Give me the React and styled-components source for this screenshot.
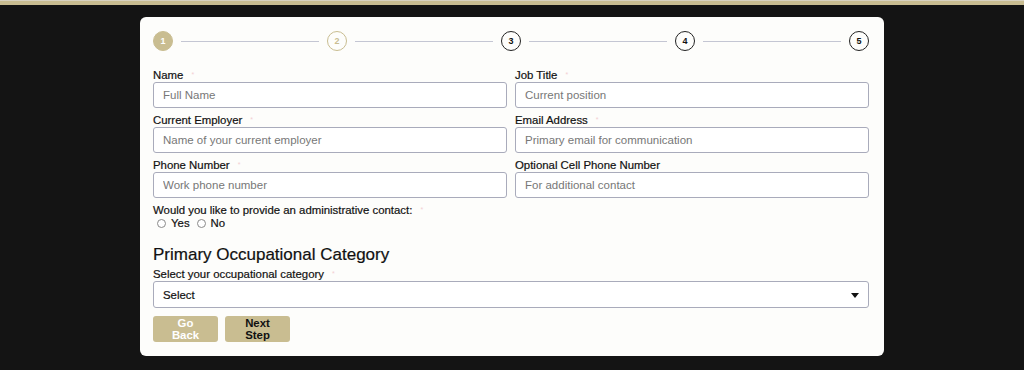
import React from 'react';
import styled, { createGlobalStyle } from 'styled-components';

const GlobalStyle = createGlobalStyle`
    html, body {
        margin: 0;
        padding: 0;
        background: #141414;
        font-family: "Liberation Sans", Arial, sans-serif;
    }
`;

const GOLD = '#c9bd91';

const TopBand = styled.div`
    height: 4px;
    border-top: 1px solid #d8d2c0;
    background: ${GOLD};
`;

const Page = styled.div`
    display: flex;
    justify-content: flex-start;
    padding: 12px 0 0 140px;
    height: 354px;
`;

const Card = styled.div`
    width: 744px;
    height: 339px;
    box-sizing: border-box;
    padding: 14px 15px 14px 13px;
    background: #fdfdfb;
    border-radius: 6px;
`;

const Stepper = styled.div`
    display: flex;
    align-items: center;
    height: 20px;
    margin-bottom: 17px;
`;

const StepCircle = styled.div`
    width: 20px;
    height: 20px;
    box-sizing: border-box;
    border-radius: 50%;
    display: flex;
    align-items: center;
    justify-content: center;
    font-size: 9px;
    font-weight: bold;
    border: 1px solid ${(p) => (p.state === 'todo' ? '#222' : GOLD)};
    background: ${(p) => (p.state === 'active' ? GOLD : 'transparent')};
    color: ${(p) => (p.state === 'active' ? '#fff' : p.state === 'next' ? GOLD : '#111')};
`;

const StepLine = styled.div`
    flex: 1;
    height: 1px;
    margin: 0 8px;
    background: #c4c6d3;
`;

const Grid = styled.div`
    display: grid;
    grid-template-columns: 1fr 1fr;
    column-gap: 8px;
    row-gap: 5px;
`;

const Field = styled.div`
    display: flex;
    flex-direction: column;
`;

const Label = styled.label`
    display: block;
    height: 14px;
    line-height: 14px;
    font-size: 11.4px;
    color: #111;
    -webkit-text-stroke: 0.2px #111;
`;

const Star = styled.span`
    color: #f3cfd2;
    font-size: 7px;
    margin-left: 8px;
    vertical-align: top;
    -webkit-text-stroke: 0;
`;

const Input = styled.input`
    height: 26px;
    box-sizing: border-box;
    border: 1px solid #a9abbb;
    border-radius: 3px;
    padding: 0 9px;
    font-family: inherit;
    font-size: 11.5px;
    background: #fff;
    &::placeholder {
        color: #777;
    }
`;

const Question = styled(Label)`
    margin-top: 5px;
`;

const RadioRow = styled.div`
    display: flex;
    align-items: center;
    height: 12px;
    padding-left: 4px;
    gap: 7px;
`;

const RadioOption = styled.span`
    display: flex;
    align-items: center;
    gap: 5px;
    font-size: 11.4px;
    color: #111;
    -webkit-text-stroke: 0.2px #111;
`;

const RadioDot = styled.span`
    width: 9px;
    height: 9px;
    box-sizing: border-box;
    border: 1px solid #8a8a8a;
    border-radius: 50%;
    background: #fff;
`;

const Heading = styled.h2`
    margin: 16px 0 2px;
    height: 20px;
    line-height: 20px;
    font-size: 17px;
    font-weight: normal;
    color: #111;
    -webkit-text-stroke: 0.2px #111;
`;

const SelectBox = styled.div`
    height: 27px;
    box-sizing: border-box;
    border: 1px solid #a9abbb;
    border-radius: 3px;
    padding: 0 9px 0 9px;
    display: flex;
    align-items: center;
    justify-content: space-between;
    background: #fff;
    font-size: 11.4px;
    color: #111;
    -webkit-text-stroke: 0.2px #111;
`;

const Caret = styled.span`
    width: 0;
    height: 0;
    border-left: 4px solid transparent;
    border-right: 4px solid transparent;
    border-top: 5px solid #111;
    margin-top: 2px;
`;

const Buttons = styled.div`
    display: flex;
    gap: 7px;
    margin-top: 8px;
`;

const Button = styled.button`
    width: 65px;
    height: 26px;
    border: none;
    border-radius: 3px;
    background: ${GOLD};
    color: ${(p) => (p.light ? '#fff' : '#111')};
    font-family: inherit;
    font-size: 11.4px;
    font-weight: bold;
    line-height: 12px;
    padding: 0 14px;
`;

const steps = [
    { n: 1, state: 'active' },
    { n: 2, state: 'next' },
    { n: 3, state: 'todo' },
    { n: 4, state: 'todo' },
    { n: 5, state: 'todo' },
];

const fields = [
    { label: 'Name', placeholder: 'Full Name', required: true },
    { label: 'Job Title', placeholder: 'Current position', required: true },
    { label: 'Current Employer', placeholder: 'Name of your current employer', required: true },
    { label: 'Email Address', placeholder: 'Primary email for communication', required: true },
    { label: 'Phone Number', placeholder: 'Work phone number', required: true },
    { label: 'Optional Cell Phone Number', placeholder: 'For additional contact', required: false },
];

export default function App() {
    return (
        <>
            <GlobalStyle />
            <TopBand />
            <Page>
                <Card>
                    <Stepper>
                        {steps.map((s, i) => (
                            <React.Fragment key={s.n}>
                                {i > 0 && <StepLine />}
                                <StepCircle state={s.state}>{s.n}</StepCircle>
                            </React.Fragment>
                        ))}
                    </Stepper>

                    <Grid>
                        {fields.map((f) => (
                            <Field key={f.label}>
                                <Label>
                                    {f.label}
                                    {f.required && <Star>*</Star>}
                                </Label>
                                <Input placeholder={f.placeholder} />
                            </Field>
                        ))}
                    </Grid>

                    <Question>
                        Would you like to provide an administrative contact:
                        <Star>*</Star>
                    </Question>
                    <RadioRow>
                        <RadioOption><RadioDot />Yes</RadioOption>
                        <RadioOption><RadioDot />No</RadioOption>
                    </RadioRow>

                    <Heading>Primary Occupational Category</Heading>
                    <Label>
                        Select your occupational category
                        <Star>*</Star>
                    </Label>
                    <SelectBox>
                        Select
                        <Caret />
                    </SelectBox>

                    <Buttons>
                        <Button light>Go Back</Button>
                        <Button>Next Step</Button>
                    </Buttons>
                </Card>
            </Page>
        </>
    );
}
